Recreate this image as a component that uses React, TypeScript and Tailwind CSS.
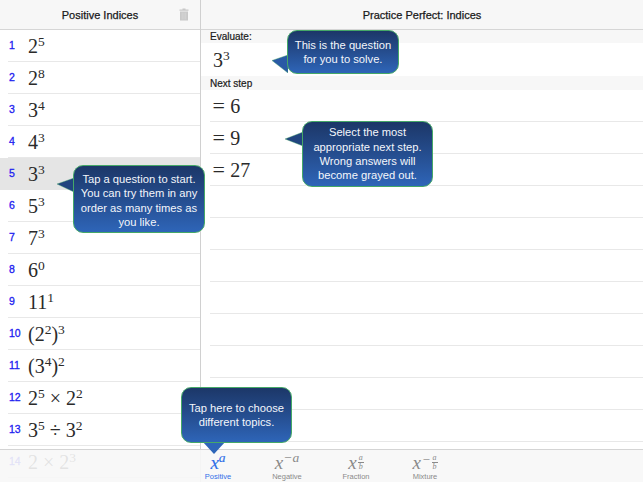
import type { ReactNode } from "react";

function Sup({ children }: { children: ReactNode }) {
  return <span className="relative -top-[7px] text-[13.5px] leading-none">{children}</span>;
}

function Pow({ base, exp }: { base: string; exp: string }) {
  return (
    <span>
      {base}
      <Sup>{exp}</Sup>
    </span>
  );
}

const questions: { n: number; math: ReactNode }[] = [
  { n: 1, math: <Pow base="2" exp="5" /> },
  { n: 2, math: <Pow base="2" exp="8" /> },
  { n: 3, math: <Pow base="3" exp="4" /> },
  { n: 4, math: <Pow base="4" exp="3" /> },
  { n: 5, math: <Pow base="3" exp="3" /> },
  { n: 6, math: <Pow base="5" exp="3" /> },
  { n: 7, math: <Pow base="7" exp="3" /> },
  { n: 8, math: <Pow base="6" exp="0" /> },
  { n: 9, math: <Pow base="11" exp="1" /> },
  { n: 10, math: <span>(<Pow base="2" exp="2" />)<Sup>3</Sup></span> },
  { n: 11, math: <span>(<Pow base="3" exp="4" />)<Sup>2</Sup></span> },
  { n: 12, math: <span><Pow base="2" exp="5" /> × <Pow base="2" exp="2" /></span> },
  { n: 13, math: <span><Pow base="3" exp="5" /> ÷ <Pow base="3" exp="2" /></span> },
  { n: 14, math: <span>2 × <Pow base="2" exp="3" /></span> },
];

function Callout({ className, arrow, children }: { className: string; arrow: ReactNode; children: ReactNode }) {
  return (
    <div className={`absolute ${className}`}>
      {arrow}
      <div className="relative flex h-full w-full items-center justify-center rounded-[10px] border border-[#45a868] bg-gradient-to-b from-[#1c3768] to-[#2e65b8] text-center text-[11.2px] leading-[14.3px] text-[#f4f6fb]">
        {children}
      </div>
    </div>
  );
}

function Frac() {
  return (
    <span className="ml-[1px] inline-flex flex-col items-center align-[9px] text-[8px] italic">
      <span className="border-b border-current px-[1px] leading-[7.5px]">a</span>
      <span className="leading-[7.5px]">b</span>
    </span>
  );
}

function Tab({ label, active, icon }: { label: string; active?: boolean; icon: ReactNode }) {
  return (
    <div className={`flex w-[69px] flex-col items-center ${active ? "text-[#2f6fe8]" : "text-[#8a8a8a]"}`}>
      <div className="flex h-[22px] translate-y-[1px] items-end font-['Liberation_Serif',serif] text-[19px] leading-[20px] italic">{icon}</div>
      <div className="font-['Liberation_Sans',sans-serif] text-[7.5px] leading-[9px]">{label}</div>
    </div>
  );
}

export default function App() {
  return (
    <div className="relative flex h-[482px] w-[643px] overflow-hidden bg-white font-['Liberation_Sans',sans-serif] text-[#1a1a1a]">
      {/* left list */}
      <div className="h-full w-[201px] shrink-0 border-r border-[#d0d0d0]">
        <div className="relative flex h-[30px] items-center justify-center border-b border-[#d6d6d6] bg-[#f7f7f7] pt-[1px] text-[11px] [-webkit-text-stroke:0.25px]">
          Positive Indices
          <svg className="absolute left-[179px] top-[8px]" width="10" height="13" viewBox="0 0 10 13">
            <path d="M3.5 0.5h3v1h3v1.2h-9V1.5h3z M1 3.4h8v9.1H1z" fill="#c8c8c8" />
            <path d="M3.2 4.5v7 M5 4.5v7 M6.8 4.5v7" stroke="#dedede" strokeWidth="0.6" />
          </svg>
        </div>
        {questions.map((q) => {
          const selected = q.n === 5;
          return (
            <div key={q.n} className={`h-[32px] pl-[8px] ${selected ? "bg-[#e5e5e5]" : ""}`}>
              <div className={`flex h-full items-center border-b ${selected ? "border-transparent" : "border-[#e8e8e8]"}`}>
                <span className="w-[20px] pl-[1px] text-[10.5px] text-[#2020f0] [-webkit-text-stroke:0.3px]">{q.n}</span>
                <span className="font-['Liberation_Serif',serif] text-[20px] leading-none text-[#2a2a2a]">{q.math}</span>
              </div>
            </div>
          );
        })}
      </div>

      {/* right panel */}
      <div className="min-w-0 flex-1">
        <div className="flex h-[30px] items-center justify-center border-b border-[#d6d6d6] bg-[#f7f7f7] pt-[1px] text-[11px] [-webkit-text-stroke:0.25px]">
          Practice Perfect: Indices
        </div>
        <div className="flex h-[13px] items-center bg-[#f7f7f7] pl-[9px] text-[10px] [-webkit-text-stroke:0.2px]">Evaluate:</div>
        <div className="flex h-[33px] items-center pl-[12px] font-['Liberation_Serif',serif] text-[20px] leading-none text-[#2a2a2a]">
          <Pow base="3" exp="3" />
        </div>
        <div className="flex h-[14px] items-center bg-[#f7f7f7] pl-[9px] text-[10px] [-webkit-text-stroke:0.2px]">Next step</div>
        <div className="pl-[9px]">
          {["6", "9", "27", "", "", "", "", "", "", "", ""].map((s, i) => (
            <div key={i} className="flex h-[32px] items-center border-b border-[#e8e8e8] pl-[3px] font-['Liberation_Serif',serif] text-[20px] leading-none text-[#2a2a2a]">
              {s && <span className="inline-flex gap-[6px]"><span className="scale-x-110">=</span>{s}</span>}
            </div>
          ))}
        </div>
      </div>

      {/* tab bar */}
      <div className="absolute bottom-0 left-0 flex h-[33px] w-full justify-center border-t border-[#d4d4d4] bg-[#f7f7f7]/90">
        <Tab active label="Positive" icon={<span className="[-webkit-text-stroke:0.15px]">x<Sup>a</Sup></span>} />
        <Tab label="Negative" icon={<span>x<Sup>−a</Sup></span>} />
        <Tab label="Fraction" icon={<span>x<Frac /></span>} />
        <Tab label="Mixture" icon={<span>x<span className="ml-[1px] align-[5px] text-[13px] leading-none">−</span><Frac /></span>} />
      </div>

      {/* help callouts */}
      <Callout
        className="left-[287px] top-[30px] h-[44px] w-[112px]"
        arrow={
          <svg className="absolute -left-[15px] top-[24px]" width="16" height="19" viewBox="0 0 16 19">
            <path d="M0 6.5 L16 1 L16 19 Z" fill="#2a5aa5" stroke="#45a868" strokeWidth="0.4" />
          </svg>
        }
      >
        <span>This is the question<br />for you to solve.</span>
      </Callout>
      <Callout
        className="left-[302px] top-[121px] h-[66px] w-[131px]"
        arrow={
          <svg className="absolute -left-[17px] top-[10px]" width="18" height="16" viewBox="0 0 18 16">
            <path d="M0 8 L18 1 L18 15 Z" fill="#21447f" stroke="#45a868" strokeWidth="0.4" />
          </svg>
        }
      >
        <span>Select the most<br />appropriate next step.<br />Wrong answers will<br />become grayed out.</span>
      </Callout>
      <Callout
        className="left-[73px] top-[165px] h-[68px] w-[132px]"
        arrow={
          <svg className="absolute -left-[16px] top-[12px]" width="17" height="16" viewBox="0 0 17 16">
            <path d="M0 7 L17 1 L17 15 Z" fill="#21447f" stroke="#45a868" strokeWidth="0.4" />
          </svg>
        }
      >
        <span className="pt-[3px]">Tap a question to start.<br />You can try them in any<br />order as many times as<br />you like.</span>
      </Callout>
      <Callout
        className="left-[181px] top-[387px] h-[56px] w-[111px]"
        arrow={
          <svg className="absolute left-[21px] top-[54px]" width="24" height="13" viewBox="0 0 24 13">
            <path d="M0 0 L24 0 L12 13 Z" fill="#2e65b8" />
          </svg>
        }
      >
        <span>Tap here to choose<br />different topics.</span>
      </Callout>
    </div>
  );
}
